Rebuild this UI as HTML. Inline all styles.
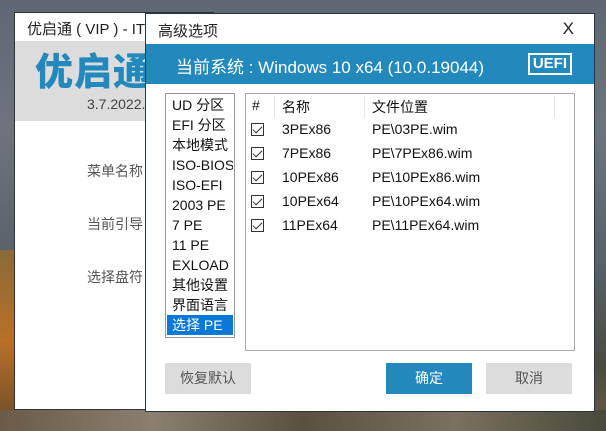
<!DOCTYPE html>
<html><head><meta charset="utf-8"><style>
*{margin:0;padding:0;box-sizing:border-box}
body{width:606px;height:431px;overflow:hidden;position:relative;font-family:"Liberation Sans","Noto Sans CJK SC",sans-serif;
background:linear-gradient(180deg,#5e6874 0%,#6d747c 30%,#58626c 60%,#4a4c40 85%,#6b5a48 100%);}
.bl{position:absolute;left:0;top:250px;width:20px;height:181px;background:linear-gradient(180deg,#8a6a3a,#b8702a,#6a4a2a)}
.bb{position:absolute;left:0;top:410px;width:606px;height:21px;background:linear-gradient(90deg,#6a5a48,#8a8070,#5a5040,#7a7060,#4a4a3a)}
.main{position:absolute;left:14px;top:12px;width:200px;height:398px;background:#fff;border:1px solid #333}
.main .t{height:28px;font-size:15px;color:#222;padding:5px 0 0 12px}
.main .band{height:80px;background:#dcdcdc;position:relative}
.logo{position:absolute;left:20px;top:12px;font-size:38px;font-weight:900;color:#2389bd;letter-spacing:1px;line-height:40px}
.ver{position:absolute;left:72px;top:55px;font-size:14px;color:#444}
.lab{position:absolute;left:72px;font-size:14px;color:#555}
.dlg{position:absolute;left:145px;top:13px;width:450px;height:399px;background:#fff;border:1px solid #2a3448}
.dt{height:30px;font-size:15px;color:#222;padding:6px 0 0 12px;position:relative}
.x{position:absolute;right:20px;top:5px;font-size:17px}
.db{height:40px;background:#2389bd;color:#fff;font-size:17px;padding:9px 0 0 30px;position:relative}
.uefi{position:absolute;right:22px;top:9px;border:2px solid #fff;font-weight:bold;font-size:15px;padding:0 3px;line-height:18px}
.lst{position:absolute;left:19px;top:79px;width:70px;height:245px;border:1px solid #999;padding:1px}
.lst div{height:20px;font-size:14px;line-height:20px;padding-left:5px;color:#111;white-space:nowrap;overflow:hidden}
.lst .sel{background:#0a78d7;color:#fff}
.tbl{position:absolute;left:99px;top:79px;width:330px;height:258px;border:1px solid #aaa}
.row{position:absolute;left:0;height:24px;font-size:14px;color:#111;width:100%}
.row span{position:absolute;top:3px}
.cb{position:absolute;left:5px;top:5px;width:13px;height:13px;border:1px solid #333}
.cb:after{content:"";position:absolute;left:3px;top:0px;width:4px;height:8px;border:solid #333;border-width:0 1.5px 1.5px 0;transform:rotate(45deg)}
.sep{position:absolute;top:2px;width:1px;height:22px;background:#e4e4e4}
.btn{position:absolute;top:349px;height:31px;width:86px;font-size:14px;text-align:center;line-height:31px;background:#dcdcdc;color:#555}
</style></head><body>
<div class="bl"></div><div class="bb"></div>
<div class="main"><div class="t">优启通 ( VIP ) - IT天</div>
<div class="band"><div class="logo">优启通</div><div class="ver">3.7.2022.0</div></div>
<div class="lab" style="top:148px">菜单名称</div>
<div class="lab" style="top:201px">当前引导</div>
<div class="lab" style="top:254px">选择盘符</div>
</div>
<div class="dlg">
<div class="dt">高级选项<span class="x">X</span></div>
<div class="db">当前系统 : Windows 10 x64 (10.0.19044)<span class="uefi">UEFI</span></div>
<div class="lst"><div>UD 分区</div><div>EFI 分区</div><div>本地模式</div><div>ISO-BIOS</div><div>ISO-EFI</div><div>2003 PE</div><div>7 PE</div><div>11 PE</div><div>EXLOAD</div><div>其他设置</div><div>界面语言</div><div class="sel">选择 PE</div></div>
<div class="tbl">
<div class="row" style="top:0"><span style="left:6px">#</span><div class="sep" style="left:28px"></div><span style="left:36px">名称</span><div class="sep" style="left:118px"></div><span style="left:126px">文件位置</span><div class="sep" style="left:308px"></div></div>
<div class="row" style="top:24px"><div class="cb"></div><span style="left:36px">3PEx86</span><span style="left:126px">PE\03PE.wim</span></div>
<div class="row" style="top:48px"><div class="cb"></div><span style="left:36px">7PEx86</span><span style="left:126px">PE\7PEx86.wim</span></div>
<div class="row" style="top:72px"><div class="cb"></div><span style="left:36px">10PEx86</span><span style="left:126px">PE\10PEx86.wim</span></div>
<div class="row" style="top:96px"><div class="cb"></div><span style="left:36px">10PEx64</span><span style="left:126px">PE\10PEx64.wim</span></div>
<div class="row" style="top:120px"><div class="cb"></div><span style="left:36px">11PEx64</span><span style="left:126px">PE\11PEx64.wim</span></div>
</div>
<div class="btn" style="left:19px">恢复默认</div>
<div class="btn" style="left:240px;background:#2389bd;color:#fff">确定</div>
<div class="btn" style="left:340px">取消</div>
</div>
</body></html>
